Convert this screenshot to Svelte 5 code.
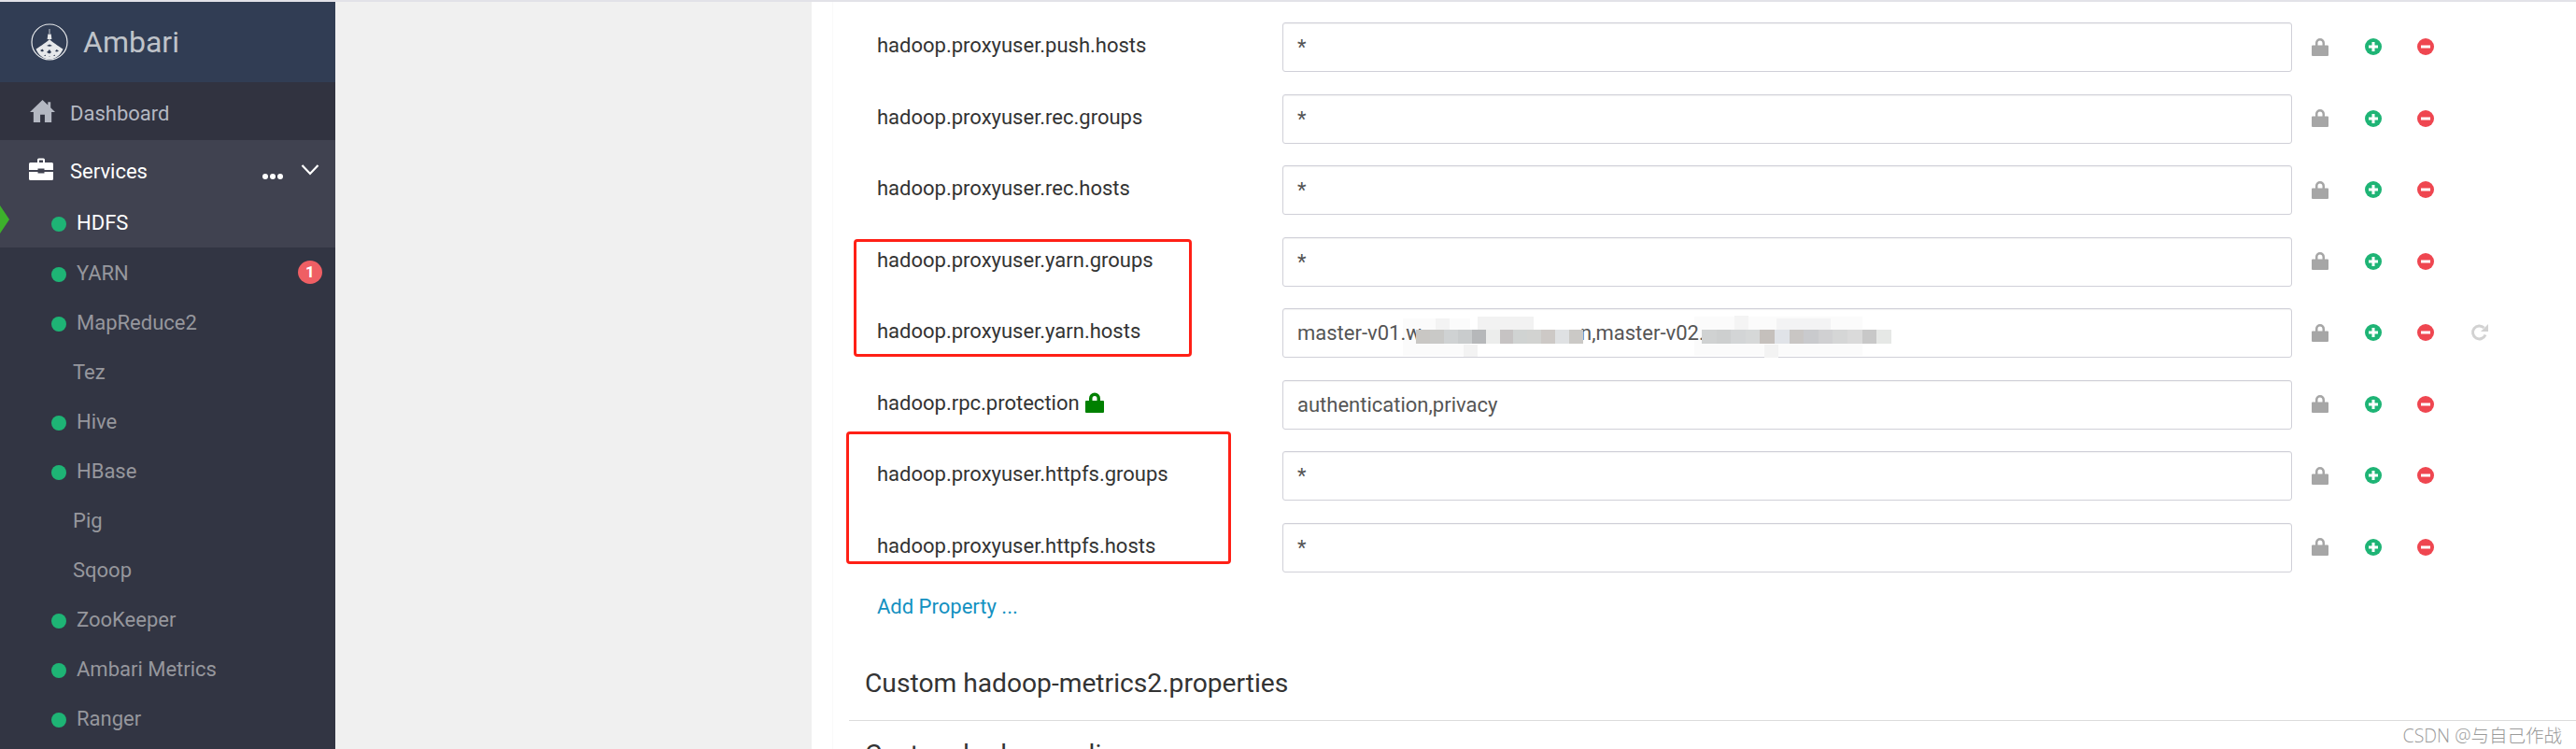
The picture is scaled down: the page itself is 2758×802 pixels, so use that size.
<script lang="ts">
	const services = [
		{ name: 'HDFS', dot: true, active: true },
		{ name: 'YARN', dot: true, badge: 1 },
		{ name: 'MapReduce2', dot: true },
		{ name: 'Tez' },
		{ name: 'Hive', dot: true },
		{ name: 'HBase', dot: true },
		{ name: 'Pig' },
		{ name: 'Sqoop' },
		{ name: 'ZooKeeper', dot: true },
		{ name: 'Ambari Metrics', dot: true },
		{ name: 'Ranger', dot: true }
	];

	const rows = [
		{ key: 'hadoop.proxyuser.push.hosts', value: '*' },
		{ key: 'hadoop.proxyuser.rec.groups', value: '*' },
		{ key: 'hadoop.proxyuser.rec.hosts', value: '*' },
		{ key: 'hadoop.proxyuser.yarn.groups', value: '*' },
		{ key: 'hadoop.proxyuser.yarn.hosts', value: 'n,master-v02.', prefix: 'master-v01.w', blurred: true, undo: true },
		{ key: 'hadoop.rpc.protection', value: 'authentication,privacy', secure: true },
		{ key: 'hadoop.proxyuser.httpfs.groups', value: '*' },
		{ key: 'hadoop.proxyuser.httpfs.hosts', value: '*' }
	];

	// mosaic over the hostnames in the yarn.hosts value
	const blurA = ['#c9c7c4', '#c9c9c7', '#cfd2d3', '#c9cccd', '#b6b8ba', '#ecedec', '#c6c3c3', '#d0d3d2', '#d2d3d1', '#cdc9c6', '#dfe1e3', '#cbc9c6'];
	const blurB = ['#d0d2d2', '#cdcfcf', '#d3d5d6', '#d6d8d8', '#c5c0bc', '#e0e3e8', '#c9c6c4', '#c9cacd', '#d0d0d2', '#d5d6d6', '#dadada', '#c8c8c8', '#e6e8e6'];
	const halos = [
		{ left: 128, top: 10, width: 72, height: 40, color: '#fbfbfb' },
		{ left: 163, top: 10, width: 15, height: 13, color: '#f3f3f3' },
		{ left: 208, top: 8, width: 60, height: 15, color: '#f2f2f2' },
		{ left: 193, top: 38, width: 15, height: 13, color: '#f3f3f3' },
		{ left: 440, top: 8, width: 180, height: 42, color: '#fbfbfb' },
		{ left: 483, top: 7, width: 15, height: 16, color: '#f4f4f4' },
		{ left: 528, top: 10, width: 58, height: 13, color: '#f3f3f4' },
		{ left: 515, top: 38, width: 15, height: 14, color: '#f3f3f3' }
	];
</script>

<div class="page">
	<aside class="sidebar">
		<header class="brand">
			<svg class="logo" viewBox="0 0 40 40" width="40" height="40">
				<circle cx="20" cy="20" r="19" fill="none" stroke="#e6e8ea" stroke-width="1.200" />
				<path d="M19.600 6h.8v5h-.8z" fill="#e6e8ea" />
				<path d="M18.300 11.500h3.400l.7 5.500h-4.800z" fill="#e6e8ea" />
				<path d="M20 17c-3 3-9 7-14.500 10.500C7.500 33 13 38.500 20 38.500S32.500 33 34.500 27.500C29 24 23 20 20 17z" fill="#e6e8ea" />
				<path d="M10 29l2.500-1.500 1.500 2-2 1zM17 31l3-3 2 3-2 1.500zM26 30l1.500-2 2.500 1.500-2 1zM17 24l3-1.500 3 1.500-3 .8z" fill="#313d54" />
				<path d="M14 35l1.500-1.500.5 1.500zM19.500 36l.5-1 .5 1zM24 35l1.500-1.500.5 1.500z" fill="#313d54" />
			</svg>
			<span>Ambari</span>
		</header>
		<a class="nav dashboard">
			<svg viewBox="0 0 28 26" width="27" height="26"><path d="M14 .500 0 14h4v11.500h7.500V17h5v8.500H24V14h4l-5-4.800V3h-3v3.300z" fill="#b4b8c2" /></svg>
			<span>Dashboard</span>
		</a>
		<div class="services">
			<a class="nav current">
				<svg viewBox="0 0 26 24" width="26" height="24">
					<path d="M9 5V2a1.500 1.500 0 0 1 1.500-1.500h5A1.500 1.500 0 0 1 17 2v3h-2V2.500h-4V5z" fill="#fff" />
					<path d="M1.500 5h23A1.500 1.500 0 0 1 26 6.500V13h-9.500v-1.500h-7V13H0V6.500A1.500 1.500 0 0 1 1.500 5zM0 15h9.500v1.500h7V15H26v7.500a1.500 1.500 0 0 1-1.500 1.500h-23A1.500 1.500 0 0 1 0 22.500z" fill="#fff" />
				</svg>
				<span>Services</span>
				<i class="dots"><b></b><b></b><b></b></i>
				<svg class="chevron" viewBox="0 0 20 14" width="20" height="14"><path d="M1.500 2 10 11l8.500-9" fill="none" stroke="#fff" stroke-width="2.200" /></svg>
			</a>
		</div>
		<ul class="service-list">
			{#each services as s}
				<li class:active={s.active} class:plain={!s.dot}>
					{#if s.dot}<i class="dot"></i>{/if}
					<span>{s.name}</span>
					{#if s.badge}<em class="badge">{s.badge}</em>{/if}
				</li>
			{/each}
		</ul>
		<i class="marker"></i>
	</aside>

	<div class="gutter"></div>

	<main class="content">
		<div class="panel">
			<div class="rows">
				{#each rows as row}
					<div class="row">
						<label class="key">
							{row.key}
							{#if row.secure}
								<svg viewBox="0 0 20 22" width="20" height="22"><path d="M4 10V6.500a6 6 0 0 1 12 0V10h-3.500V6.500a2.500 2.500 0 0 0-5 0V10z M1 9h18a1 1 0 0 1 1 1v11a1 1 0 0 1-1 1H1a1 1 0 0 1-1-1V10a1 1 0 0 1 1-1z" fill="#008000" /></svg>
							{/if}
						</label>
						<div class="field">
							{#if row.prefix}<span class="prefix">{row.prefix}</span>{/if}
							<span class="value">{row.value}</span>
							{#if row.blurred}
								{#each halos as h}
									<i class="halo" style="left:{h.left}px;top:{h.top}px;width:{h.width}px;height:{h.height}px;background:{h.color}"></i>
								{/each}
								<div class="blur a">{#each blurA as c}<i style="background:{c}"></i>{/each}</div>
								<div class="blur b">{#each blurB as c}<i style="background:{c}"></i>{/each}</div>
							{/if}
						</div>
						<div class="actions">
							<svg viewBox="0 0 18 19" width="18" height="19"><path d="M4 8V5a5 5 0 0 1 10 0v3h-2.500V5a2.500 2.500 0 0 0-5 0v3z M1 7.500h16a1 1 0 0 1 1 1V18a1 1 0 0 1-1 1H1a1 1 0 0 1-1-1V8.500a1 1 0 0 1 1-1z" fill="#a6a6a6" /></svg>
							<svg viewBox="0 0 18 18" width="18" height="18"><circle cx="9" cy="9" r="9" fill="#1eb475" /><path d="M7.500 4h3v3.500H14v3h-3.500V14h-3v-3.500H4v-3h3.500z" fill="#fff" /></svg>
							<svg viewBox="0 0 18 18" width="18" height="18"><circle cx="9" cy="9" r="9" fill="#ef4650" /><path d="M4 7.500h10v3H4z" fill="#fff" /></svg>
							{#if row.undo}
								<svg viewBox="0 0 20 20" width="20" height="20"><path d="M16 12.500A7 7 0 1 1 14.500 5" fill="none" stroke="#d2d2d2" stroke-width="3" /><path d="M19 1v8h-8z" fill="#d2d2d2" /></svg>
							{/if}
						</div>
					</div>
				{/each}
			</div>
			<a class="add">Add Property ...</a>
			<h3 class="section first">Custom hadoop-metrics2.properties</h3>
			<h3 class="section next">Custom hadoop-policy</h3>
		</div>
		<div class="box yarn"></div>
		<div class="box httpfs"></div>
		<div class="mark">CSDN @与自己作战</div>
	</main>
</div>

<style>
	:global(body) {
		margin: 0;
		background: #fff;
		overflow: hidden;
	}

	.page {
		position: relative;
		display: flex;
		width: 2758px;
		height: 802px;
		overflow: hidden;
		border-top: 2px solid #e2e2e8;
		box-sizing: border-box;
		font-family: Roboto, 'Noto Sans CJK SC', sans-serif;
	}

	.sidebar {
		position: relative;
		width: 359px;
		flex: none;
		background: #323543;
	}

	.brand {
		display: flex;
		align-items: center;
		gap: 16px;
		height: 86px;
		padding-left: 33px;
		background: #313d54;
		color: #bfc3c9;
		font-size: 32px;
	}

	.nav {
		display: flex;
		align-items: center;
		font-size: 22px;
	}

	.nav > span {
		margin-top: 4px;
	}

	.dashboard {
		height: 62px;
		padding-left: 32px;
		background: #313340;
		color: #b4b8c2;
	}

	.dashboard > span {
		margin-left: 16px;
	}

	.services {
		height: 61px;
		background: #404250;
	}

	.current {
		height: 61px;
		padding-left: 31px;
		color: #fff;
	}

	.current > span {
		margin-left: 18px;
		margin-top: 5px;
	}

	.dots {
		display: flex;
		gap: 2px;
		margin-left: auto;
		margin-top: 17px;
	}

	.dots b {
		width: 6px;
		height: 6px;
		border-radius: 50%;
		background: #fff;
	}

	.chevron {
		margin: 3px 17px 0 19px;
	}

	.service-list {
		list-style: none;
		margin: 0;
		padding: 0;
		font-size: 22px;
		color: #96979d;
	}

	.service-list li {
		display: flex;
		align-items: center;
		height: 53px;
		padding-left: 55px;
	}

	.service-list li span {
		margin-top: 1px;
	}

	.service-list li.active {
		height: 54px;
		background: #404250;
		color: #fff;
	}

	.service-list li.plain {
		padding-left: 78px;
	}

	.dot {
		width: 16px;
		height: 16px;
		margin: 4px 11px 0 0;
		border-radius: 50%;
		background: #1eb475;
	}

	.badge {
		margin-left: auto;
		margin-right: 14px;
		width: 26px;
		height: 25px;
		border-radius: 50%;
		background: #ef5f64;
		color: #fff;
		font: 700 17px/25px Roboto, sans-serif;
		text-align: center;
	}

	.marker {
		position: absolute;
		left: 0;
		top: 218px;
		width: 10px;
		height: 30px;
		background: #3db12b;
		clip-path: polygon(0 0, 100% 50%, 0 100%);
	}

	.gutter {
		width: 510px;
		flex: none;
		background: #f0f0f0;
	}

	.content {
		position: relative;
		flex: 1;
		padding-left: 22px;
		background: #fff;
	}

	.panel {
		height: 100%;
		padding-top: 22px;
		box-sizing: border-box;
		border-left: 1px solid #f9f9f9;
	}

	.rows {
		display: flex;
		flex-direction: column;
		gap: 23.500px;
	}

	.row {
		display: flex;
		align-items: center;
		height: 53px;
		padding-left: 47px;
	}

	.key {
		display: flex;
		align-items: center;
		gap: 6px;
		width: 434px;
		height: 53px;
		flex: none;
		padding-bottom: 4px;
		box-sizing: border-box;
		color: #333;
		font-size: 22px;
	}

	.field {
		position: relative;
		display: flex;
		align-items: center;
		width: 1081px;
		height: 53px;
		flex: none;
		padding-left: 15px;
		box-sizing: border-box;
		border: 1px solid #d0d0d8;
		border-radius: 3px;
		box-shadow: inset 0 1px 1px rgba(0, 0, 0, 0.05);
		color: #555;
		font-size: 22px;
		white-space: pre;
	}

	.prefix {
		position: relative;
		z-index: 1;
		width: 303px;
		flex: none;
	}

	.value {
		position: relative;
		z-index: 1;
	}

	.halo {
		position: absolute;
	}

	.blur {
		position: absolute;
		z-index: 2;
		display: flex;
		top: 22px;
		height: 15px;
	}

	.blur i {
		flex: 1;
		height: 100%;
	}

	.blur.a {
		left: 142px;
		width: 179px;
	}

	.blur.b {
		left: 448px;
		width: 203px;
	}

	.actions {
		display: flex;
		align-items: center;
		gap: 38.500px;
		margin-left: 21px;
		margin-top: -1px;
	}

	.add {
		display: block;
		margin: 24px 0 0 47px;
		color: #1491c1;
		font-size: 22px;
	}

	.section {
		margin: 0;
		font-size: 28.200px;
		font-weight: 400;
		color: #333;
		white-space: nowrap;
	}

	.section.first {
		margin: 53px 0 0 17px;
		padding: 0 0 23px 17px;
		border-bottom: 1px solid #dcdcdc;
	}

	.section.next {
		margin: 19px 0 0 34px;
	}

	.box {
		position: absolute;
		box-sizing: border-box;
		border: 3px solid #ff2016;
		border-radius: 4px;
	}

	.box.yarn {
		left: 45px;
		top: 254px;
		width: 362px;
		height: 126px;
	}

	.box.httpfs {
		left: 37px;
		top: 460px;
		width: 412px;
		height: 142px;
	}

	.mark {
		position: absolute;
		right: 15px;
		top: 770px;
		color: #9a9a9a;
		font-size: 19.500px;
		font-family: 'Open Sans', 'Noto Sans CJK SC', sans-serif;
		font-weight: 300;
	}
</style>
